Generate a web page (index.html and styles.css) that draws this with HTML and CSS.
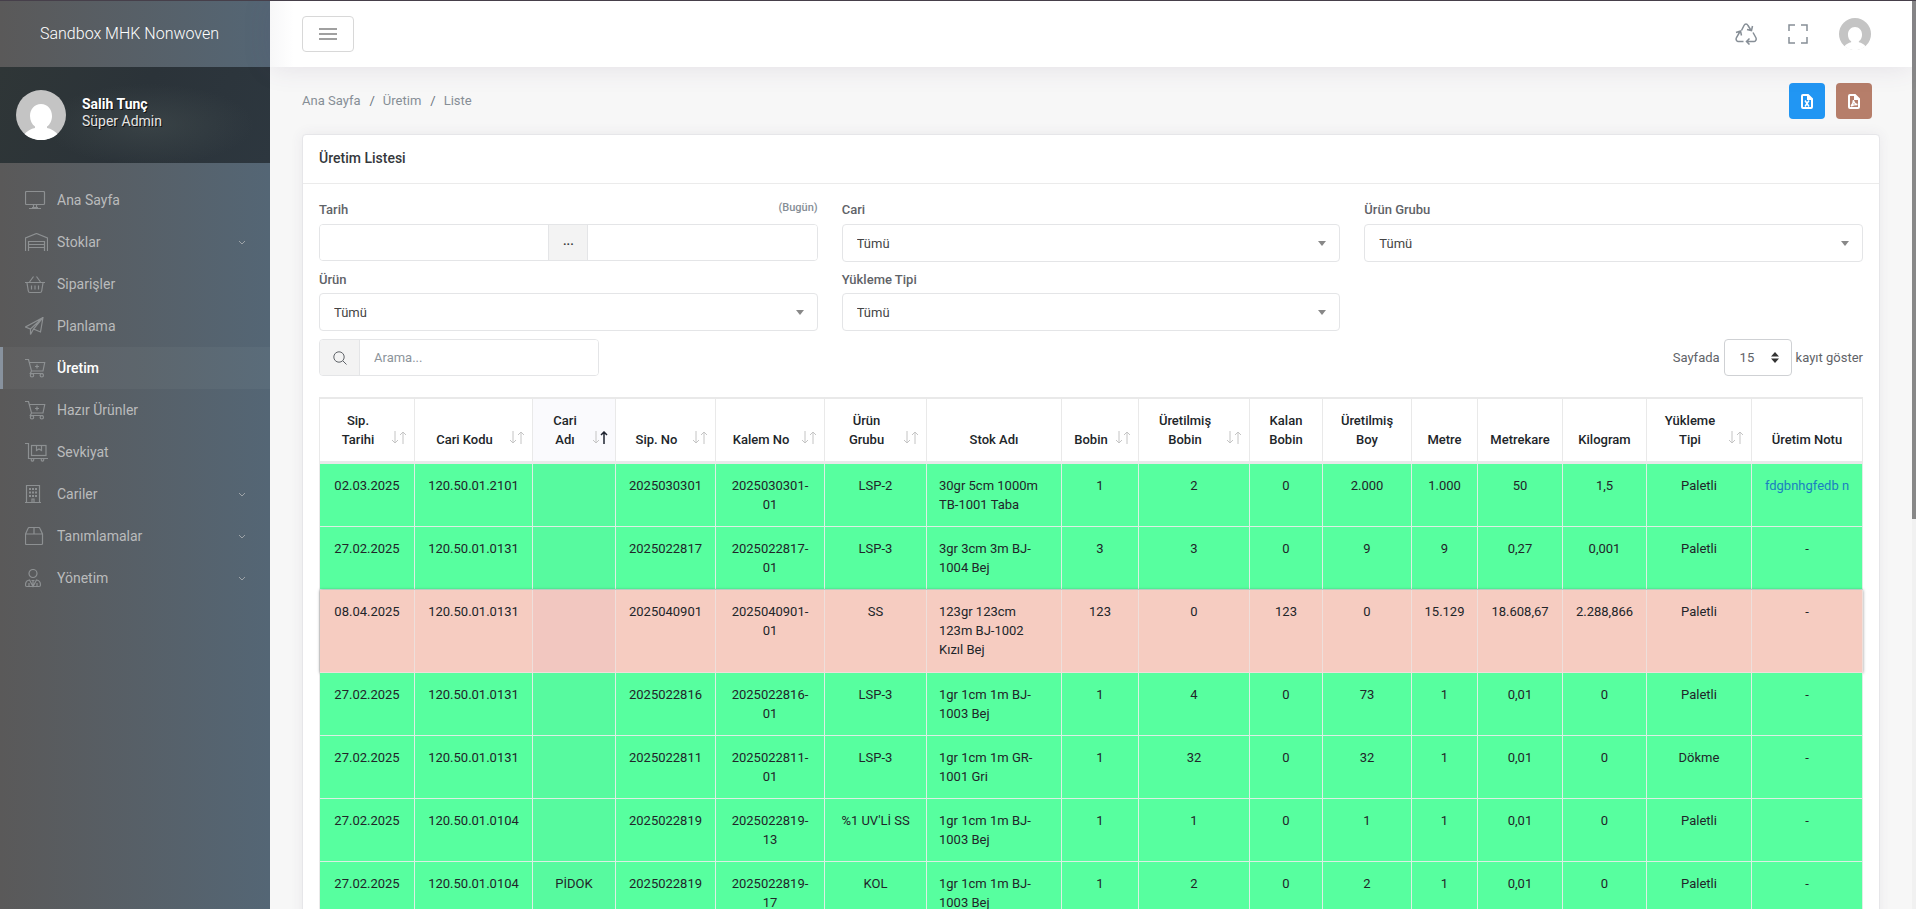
FILE: index.html
```html
<!DOCTYPE html>
<html lang="tr">
<head>
    <meta charset="UTF-8">
    <title>Üretim Listesi</title>
    <link rel="stylesheet" href="styles.css">
</head>
<body>
    <!-- shared icons -->
    <svg class="defs" width="0" height="0">
        <symbol id="sort" viewBox="0 0 16 13">
            <path d="M4 0v12M1 9l3 3 3-3M12 13V1M9 4l3-3 3 3"/>
        </symbol>
        <symbol id="sort-up" viewBox="0 0 16 13">
            <path d="M4 0v12M1 9l3 3 3-3"/>
            <path d="M12 13V1M9 4l3-3 3 3" stroke="#1f2430" stroke-width="1.5"/>
        </symbol>
        <symbol id="chevron" viewBox="0 0 8 5">
            <path d="M1 1l3 3 3-3"/>
        </symbol>
        <symbol id="cart" viewBox="0 0 23 19">
            <path d="M0 .5h3.500L6.500 12h11.500l1.700-8.500H4.500M6.500 12l-1.200 2.500h12.700M12 5.500v4M10 7.500h4"/>
            <circle cx="7" cy="16.300" r="1.700"/><circle cx="16.800" cy="16.300" r="1.700"/>
        </symbol>
        <symbol id="avatar" viewBox="0 0 50 50">
            <circle cx="25" cy="25" r="25" fill="#c4c4c4"/>
            <path d="M25 14c6.500 0 11 5 11 12 0 4.500-2 8.500-5 10.500v1.500c4 .8 8 3 10.500 6A25 25 0 0 1 8.500 44c2.500-3 6.500-5.200 10.500-6v-1.500c-3-2-5-6-5-10.500 0-7 4.500-12 11-12z" fill="#fff"/>
        </symbol>
    </svg>

    <div class="app">
        <aside class="sidebar">
            <div class="brand">Sandbox MHK Nonwoven</div>
            <div class="user">
                <svg class="user-pic"><use href="#avatar"/></svg>
                <div class="user-text">
                    <strong>Salih Tunç</strong>
                    <span>Süper Admin</span>
                </div>
            </div>
            <nav>
                <ul class="menu">
                    <li><a href="#">
                        <svg class="ico" viewBox="0 0 23 19"><rect x=".5" y=".5" width="19" height="13" rx="1"/><path d="M8.500 14v2.500M11.500 14v2.500M4 17.500h12M7 16.500h6"/></svg>
                        <span>Ana Sayfa</span></a></li>
                    <li><a href="#">
                        <svg class="ico" viewBox="0 0 23 19"><path d="M.5 18V5l11-4.500 11 4.500v13M3.500 18V8.500h16V18M3.500 11.500h16M3.500 14.500h16"/></svg>
                        <span>Stoklar</span><svg class="chev"><use href="#chevron"/></svg></a></li>
                    <li><a href="#">
                        <svg class="ico" viewBox="0 0 23 19"><path d="M0 7.500h20M4.500 7l4-5.500M15.500 7l-4-5.500M2 8l1.300 8q.2 1.500 1.700 1.500h10q1.500 0 1.700-1.500L18 8M6.500 10.500v4M10 10.500v4M13.500 10.500v4"/></svg>
                        <span>Siparişler</span></a></li>
                    <li><a href="#">
                        <svg class="ico" viewBox="0 0 23 19"><path d="M18 .5L.5 10l5 2zM18 .5L15.500 15 8.500 12zM5.500 12v5.500l3-5.500"/></svg>
                        <span>Planlama</span></a></li>
                    <li class="active"><a href="#">
                        <svg class="ico"><use href="#cart"/></svg>
                        <span>Üretim</span></a></li>
                    <li><a href="#">
                        <svg class="ico"><use href="#cart"/></svg>
                        <span>Hazır Ürünler</span></a></li>
                    <li><a href="#">
                        <svg class="ico" viewBox="0 0 23 19"><path d="M0 .5h3.500v15H23M11.500 3v4.500l2.500-1.500 2.500 1.500V3"/><rect x="6.500" y="2.500" width="14.500" height="10"/><circle cx="7.500" cy="16.800" r="1.300"/><circle cx="17.500" cy="16.800" r="1.300"/></svg>
                        <span>Sevkiyat</span></a></li>
                    <li><a href="#">
                        <svg class="ico" viewBox="0 0 23 19"><path d="M1.500.5h13v17h-13zM0 17.500h16M7 17v-3h2v3"/><path class="dots" d="M4 4h2M7 4h2M10 4h2M4 7.500h2M7 7.500h2M10 7.500h2M4 11h2M7 11h2M10 11h2"/></svg>
                        <span>Cariler</span><svg class="chev"><use href="#chevron"/></svg></a></li>
                    <li><a href="#">
                        <svg class="ico" viewBox="0 0 23 19"><path d="M.5 7L3 1.500q.4-1 1.400-1h9.200q1 0 1.400 1L17.500 7v9.500q0 1-1 1h-15q-1 0-1-1zM.5 7h17M9 .5v6.500"/></svg>
                        <span>Tanımlamalar</span><svg class="chev"><use href="#chevron"/></svg></a></li>
                    <li><a href="#">
                        <svg class="ico" viewBox="0 0 23 19"><circle cx="8" cy="4.500" r="4"/><path d="M.5 16q0-4.500 4-5l3.500 6.500 3.500-6.500q4 .5 4 5 0 1.500-1.500 1.500h-12Q.5 17.500.5 16zM6.500 11.500h3M8 11.500v6M4 14v3.500M12 14v3.500"/></svg>
                        <span>Yönetim</span><svg class="chev"><use href="#chevron"/></svg></a></li>
                </ul>
            </nav>
        </aside>

        <div class="page">
            <header class="topbar">
                <button class="toggler" type="button" aria-label="Menü"><i></i><i></i><i></i></button>
                <div class="top-icons">
                    <a href="#" aria-label="Yenile">
                        <svg width="22" height="22" viewBox="0 0 22 22"><path d="M6.500 7.500L9 2.500q.8-1.500 2-1.500t2 1.500l2.800 4.500M12 6.500l4.500 1 1-4.500M1 9.500l4.500-1.500 1 4.500M5 8.500L1.500 14.500q-.8 1.500 0 2.800t2 1.200h5M18 9.500l2.800 5q.8 1.500 0 2.800t-2 1.200h-7M14.500 15.500l-3 3 3 3"/></svg>
                    </a>
                    <a href="#" aria-label="Tam ekran">
                        <svg width="20" height="20" viewBox="0 0 20 20"><path d="M7 1H1v6M13 1h6v6M7 19H1v-6M13 19h6v-6"/></svg>
                    </a>
                    <a href="#" aria-label="Hesap">
                        <svg class="top-pic" width="32" height="32"><use href="#avatar"/></svg>
                    </a>
                </div>
            </header>

            <main class="content">
                <div class="subheader">
                    <ol class="breadcrumb">
                        <li><a href="#">Ana Sayfa</a></li>
                        <li><a href="#">Üretim</a></li>
                        <li>Liste</li>
                    </ol>
                    <div class="exports">
                        <button class="btn-excel" type="button" aria-label="Excel">
                            <svg width="12" height="15" viewBox="0 0 12 15"><path d="M1 2q0-1 1-1h5l4 4v8q0 1-1 1H2q-1 0-1-1zM7 1v4h4"/><path class="thin" d="M4 6.500l4 6M8 6.500l-4 6"/></svg>
                        </button>
                        <button class="btn-pdf" type="button" aria-label="PDF">
                            <svg width="12" height="15" viewBox="0 0 12 15"><path d="M1 2q0-1 1-1h5l4 4v8q0 1-1 1H2q-1 0-1-1zM7 1v4h4"/><path class="thin" d="M3 12q2.500-2 2.500-6 .5 4 4 4.500-4 0-6.500 1.500"/></svg>
                        </button>
                    </div>
                </div>

                <section class="card">
                    <h1 class="card-title">Üretim Listesi</h1>
                    <div class="card-body">
                        <div class="filters">
                            <div class="field">
                                <div class="label-row">
                                    <label for="tarih1">Tarih</label>
                                    <a class="today" href="#">(Bugün)</a>
                                </div>
                                <div class="range">
                                    <input id="tarih1" type="text">
                                    <span class="range-sep">...</span>
                                    <input type="text" aria-label="Bitiş tarihi">
                                </div>
                            </div>
                            <div class="field">
                                <label for="cari">Cari</label>
                                <div class="select"><select id="cari"><option>Tümü</option></select></div>
                            </div>
                            <div class="field">
                                <label for="grup">Ürün Grubu</label>
                                <div class="select"><select id="grup"><option>Tümü</option></select></div>
                            </div>
                            <div class="field">
                                <label for="urun">Ürün</label>
                                <div class="select"><select id="urun"><option>Tümü</option></select></div>
                            </div>
                            <div class="field">
                                <label for="tip">Yükleme Tipi</label>
                                <div class="select"><select id="tip"><option>Tümü</option></select></div>
                            </div>
                        </div>

                        <div class="tools">
                            <div class="search">
                                <span class="search-ico"><svg width="14" height="14" viewBox="0 0 14 14"><circle cx="6" cy="6" r="5.200"/><path d="M9.800 9.800L13.500 13.500"/></svg></span>
                                <input type="text" placeholder="Arama..." aria-label="Arama">
                            </div>
                            <label class="length">Sayfada
                                <span class="length-box"><select><option>15</option></select><svg width="8" height="11" viewBox="0 0 8 11"><path d="M4 0l4 4.500H0zM4 11L0 6.500h8z"/></svg></span>
                                kayıt göster</label>
                        </div>

                        <table class="list">
                            <colgroup>
                                <col class="c95"><col class="c118"><col class="c83"><col class="c100">
                                <col class="c109"><col class="c102"><col class="c135"><col class="c77">
                                <col class="c111"><col class="c73"><col class="c89"><col class="c66">
                                <col class="c85"><col class="c84"><col class="c105"><col class="c111">
                            </colgroup>
                            <thead>
                                <tr>
                                    <th class="sort">Sip. Tarihi<svg><use href="#sort"/></svg></th>
                                    <th class="sort">Cari Kodu<svg><use href="#sort"/></svg></th>
                                    <th class="sort sorted">Cari Adı<svg><use href="#sort-up"/></svg></th>
                                    <th class="sort">Sip. No<svg><use href="#sort"/></svg></th>
                                    <th class="sort">Kalem No<svg><use href="#sort"/></svg></th>
                                    <th class="sort">Ürün Grubu<svg><use href="#sort"/></svg></th>
                                    <th>Stok Adı</th>
                                    <th class="sort">Bobin<svg><use href="#sort"/></svg></th>
                                    <th class="sort">Üretilmiş Bobin<svg><use href="#sort"/></svg></th>
                                    <th>Kalan Bobin</th>
                                    <th>Üretilmiş Boy</th>
                                    <th>Metre</th>
                                    <th>Metrekare</th>
                                    <th>Kilogram</th>
                                    <th class="sort">Yükleme Tipi<svg><use href="#sort"/></svg></th>
                                    <th>Üretim Notu</th>
                                </tr>
                            </thead>
                            <tbody>
                                <tr><td>02.03.2025</td><td>120.50.01.2101</td><td></td><td>2025030301</td><td>2025030301-<wbr>01</td><td>LSP-2</td><td>30gr 5cm 1000m TB-1001 Taba</td><td>1</td><td>2</td><td>0</td><td>2.000</td><td>1.000</td><td>50</td><td>1,5</td><td>Paletli</td><td><a href="#">fdgbnhgfedb n</a></td></tr>
                                <tr><td>27.02.2025</td><td>120.50.01.0131</td><td></td><td>2025022817</td><td>2025022817-<wbr>01</td><td>LSP-3</td><td>3gr 3cm 3m BJ-<wbr>1004 Bej</td><td>3</td><td>3</td><td>0</td><td>9</td><td>9</td><td>0,27</td><td>0,001</td><td>Paletli</td><td>-</td></tr>
                                <tr class="waiting"><td>08.04.2025</td><td>120.50.01.0131</td><td></td><td>2025040901</td><td>2025040901-<wbr>01</td><td>SS</td><td>123gr 123cm 123m BJ-1002 Kızıl Bej</td><td>123</td><td>0</td><td>123</td><td>0</td><td>15.129</td><td>18.608,67</td><td>2.288,866</td><td>Paletli</td><td>-</td></tr>
                                <tr><td>27.02.2025</td><td>120.50.01.0131</td><td></td><td>2025022816</td><td>2025022816-<wbr>01</td><td>LSP-3</td><td>1gr 1cm 1m BJ-<wbr>1003 Bej</td><td>1</td><td>4</td><td>0</td><td>73</td><td>1</td><td>0,01</td><td>0</td><td>Paletli</td><td>-</td></tr>
                                <tr><td>27.02.2025</td><td>120.50.01.0131</td><td></td><td>2025022811</td><td>2025022811-<wbr>01</td><td>LSP-3</td><td>1gr 1cm 1m GR-<wbr>1001 Gri</td><td>1</td><td>32</td><td>0</td><td>32</td><td>1</td><td>0,01</td><td>0</td><td>Dökme</td><td>-</td></tr>
                                <tr><td>27.02.2025</td><td>120.50.01.0104</td><td></td><td>2025022819</td><td>2025022819-<wbr>13</td><td>%1 UV'Lİ SS</td><td>1gr 1cm 1m BJ-<wbr>1003 Bej</td><td>1</td><td>1</td><td>0</td><td>1</td><td>1</td><td>0,01</td><td>0</td><td>Paletli</td><td>-</td></tr>
                                <tr><td>27.02.2025</td><td>120.50.01.0104</td><td>PİDOK</td><td>2025022819</td><td>2025022819-<wbr>17</td><td>KOL</td><td>1gr 1cm 1m BJ-<wbr>1003 Bej</td><td>1</td><td>2</td><td>0</td><td>2</td><td>1</td><td>0,01</td><td>0</td><td>Paletli</td><td>-</td></tr>
                            </tbody>
                        </table>
                    </div>
                </section>
            </main>
        </div>
        <div class="scrollbar"><div class="thumb"></div></div>
    </div>
</body>
</html>
```
FILE: styles.css
```css
*{
    margin: 0;
    padding: 0;
    box-sizing: border-box;
}
body{
    font-family: Roboto, "Noto Sans", sans-serif;
    font-size: 13px;
    line-height: 19px;
    color: #5f6368;
    background: #f7f7f7;
}
a{
    color: inherit;
    text-decoration: none;
}
ul,ol{
    list-style: none;
}
input,select,button{
    font: inherit;
    color: inherit;
}
svg{
    display: block;
    fill: none;
    stroke: currentColor;
}
.defs{
    position: absolute;
}
.app{
    display: flex;
    height: 100vh;
    overflow: hidden;
    border-top: 1px solid #463f4a;
}

/* sidebar */
.sidebar{
    flex: 0 0 270px;
    background: linear-gradient(90deg, #5a5959, #546675);
    color: #fff;
}
.brand{
    height: 66px;
    line-height: 66px;
    padding-left: 40px;
    font-size: 16px;
    font-weight: 300;
}
.user{
    display: flex;
    align-items: center;
    height: 96px;
    padding-left: 16px;
    background: radial-gradient(ellipse at 55% 60%, rgba(66,76,78,0.6), rgba(66,76,78,0) 50%), linear-gradient(115deg, #2f3637, #2b3339 50%, #2d373f);
}
.user-pic{
    width: 50px;
    height: 50px;
    margin-right: 16px;
    stroke: none;
}
.user-text{
    display: flex;
    flex-direction: column;
    padding-bottom: 4px;
    font-size: 14px;
    line-height: 17px;
    text-shadow: 1px 1px 0 #111;
}
.user-text span{
    color: #e5e5e5;
}
.menu{
    padding-top: 16px;
}
.menu a{
    display: flex;
    align-items: center;
    height: 42px;
    padding: 0 24px 0 22px;
    border-left: 3px solid transparent;
    font-size: 14px;
    color: #babbbc;
}
.menu .ico{
    width: 23px;
    height: 19px;
    margin-right: 9px;
    stroke: #8d9092;
    stroke-width: 1.2;
}
.menu .dots{
    stroke-width: 2;
}
.menu .chev{
    width: 8px;
    height: 5px;
    margin-left: auto;
    stroke: #9da3a8;
}
.menu .active a{
    color: #fff;
    font-weight: 500;
    border-left-color: #88929e;
    background: rgba(255,255,255,0.04);
}

/* top bar */
.page{
    flex: 1;
    min-width: 0;
    display: flex;
    flex-direction: column;
}
.topbar{
    flex: none;
    display: flex;
    align-items: center;
    justify-content: space-between;
    height: 66px;
    padding: 0 41px 0 32px;
    background: linear-gradient(90deg, #f7f7f8, #fff 24px);
    box-shadow: 0 0 28px rgba(82,63,105,0.13);
    position: relative;
    z-index: 1;
}
.toggler{
    display: flex;
    flex-direction: column;
    align-items: center;
    justify-content: center;
    gap: 3px;
    width: 52px;
    height: 36px;
    border: 1px solid #d8d8d8;
    border-radius: 4px;
    background: #fff;
}
.toggler i{
    width: 18px;
    height: 2px;
    background: #a0a0a0;
}
.top-icons{
    display: flex;
    align-items: center;
    gap: 31px;
    color: #868e96;
}
.top-icons svg{
    stroke-width: 1.5;
}
.top-icons .top-pic{
    stroke: none;
}

/* content */
.content{
    flex: 1;
    min-height: 0;
    padding: 16px 32px 32px;
    overflow: auto;
    scrollbar-width: none;
}
.subheader{
    display: flex;
    align-items: center;
    justify-content: space-between;
    margin-bottom: 15px;
    padding-right: 8px;
}
.breadcrumb{
    display: flex;
    padding-bottom: 2px;
    color: #868e96;
}
.breadcrumb li + li::before{
    content: "/";
    padding: 0 8px 0 9px;
    color: #6c757d;
}
.exports{
    display: flex;
    gap: 11px;
}
.exports button{
    display: flex;
    align-items: center;
    justify-content: center;
    width: 36px;
    height: 36px;
    border: 0;
    border-radius: 4px;
    color: #fff;
}
.exports svg{
    stroke-width: 2;
}
.exports .thin{
    stroke-width: 1.5;
}
.btn-excel{
    background: #2196f3;
}
.btn-pdf{
    background: #b67e6a;
}
.card{
    background: #fff;
    border: 1px solid #e6e6e9;
    border-radius: 4px;
    box-shadow: 0 0 13px rgba(82,63,105,0.08);
}
.card-title{
    height: 49px;
    line-height: 46px;
    padding: 0 16px;
    border-bottom: 1px solid #ebebeb;
    font-size: 14px;
    font-weight: 500;
    color: #35383c;
}
.card-body{
    padding: 16px;
}

/* filters */
.filters{
    display: grid;
    grid-template-columns: repeat(3, 1fr);
    gap: 8px 24px;
}
.field > label,.label-row{
    display: block;
    margin-bottom: 5px;
    font-weight: 500;
}
.field:nth-child(n+4) > label{
    margin-bottom: 4px;
}
.label-row{
    display: flex;
    justify-content: space-between;
}
.today{
    font-size: 11px;
    line-height: 16px;
    color: #868e96;
}
.range,.search{
    display: flex;
    height: 37px;
    border: 1px solid #e4e5e7;
    border-radius: 4px;
    overflow: hidden;
}
.range input,.search input{
    flex: 1;
    min-width: 0;
    border: 0;
    background: #fff;
}
.range-sep{
    width: 40px;
    line-height: 32px;
    text-align: center;
    font-weight: 500;
    color: #333;
    background: #f3f3f3;
    border: solid #e4e5e7;
    border-width: 0 1px;
}
.select{
    position: relative;
}
.select::after{
    content: "";
    position: absolute;
    top: 17px;
    right: 14px;
    border: 4px solid transparent;
    border-top: 5px solid #888;
    border-bottom: 0;
}
.select select{
    display: block;
    width: 100%;
    height: 38px;
    padding: 0 14px;
    appearance: none;
    border: 1px solid #e4e5e7;
    border-radius: 4px;
    background: #fff;
    color: #444;
}

/* search and page length */
.tools{
    display: flex;
    justify-content: space-between;
    margin: 8px 0 21px;
}
.search{
    width: 280px;
}
.search-ico{
    display: flex;
    align-items: center;
    justify-content: center;
    width: 40px;
    background: #f3f3f3;
    border-right: 1px solid #e4e5e7;
}
.search input{
    padding: 0 14px;
}
.search input::placeholder{
    color: #8d949b;
}
.length{
    display: flex;
    align-items: center;
    gap: 4px;
}
.length-box{
    position: relative;
}
.length-box select{
    display: block;
    width: 68px;
    height: 37px;
    padding: 0 15px;
    appearance: none;
    border: 1px solid #cfd1d4;
    border-radius: 4px;
    background: #fff;
}
.length-box svg{
    position: absolute;
    top: 13px;
    right: 13px;
    fill: #333;
    stroke: none;
}

/* table */
.list{
    width: 100%;
    table-layout: fixed;
    border-collapse: separate;
    border-spacing: 0;
    border-left: 1px solid #e9e9e9;
    color: #212529;
}
.c66{width: 66px;}
.c73{width: 73px;}
.c77{width: 77px;}
.c83{width: 83px;}
.c84{width: 84px;}
.c85{width: 85px;}
.c89{width: 89px;}
.c95{width: 95px;}
.c100{width: 100px;}
.c102{width: 102px;}
.c105{width: 105px;}
.c109{width: 109px;}
.c111{width: 111px;}
.c118{width: 118px;}
.c135{width: 135px;}
.list th{
    position: relative;
    padding: 12px 8px;
    vertical-align: bottom;
    font-weight: 500;
    border: solid #e9e9e9;
    border-width: 2px 1px 3px 0;
}
.list th.sort{
    padding: 12px 30px 12px 12px;
}
.list th svg{
    position: absolute;
    right: 7px;
    bottom: 17px;
    width: 16px;
    height: 13px;
    color: #c4c4c4;
}
.list .sorted{
    background: #fafafd;
}
.list td{
    padding: 12px 8px;
    vertical-align: top;
    text-align: center;
    background: #57ff9f;
    border: solid #dcefe4;
    border-width: 0 1px 1px 0;
}
.list td:nth-child(3){
    background: #57fa9f;
}
.list td:nth-child(5){
    padding: 12px;
}
.list td:nth-child(7){
    padding: 12px;
    text-align: left;
}
.list td a{
    color: #1a7fc0;
}
.list .waiting td{
    padding-bottom: 13px;
    background: #f6ccc1;
    border-color: #eedfdb;
}
.list .waiting td:nth-child(3){
    background: #f2c7c0;
}
.waiting{
    box-shadow: 0 0 3px rgba(0,0,0,0.4);
}

.scrollbar{
    flex: 0 0 4px;
    background: #f1f1f1;
}
.thumb{
    height: 57%;
    background: #888;
}
```
